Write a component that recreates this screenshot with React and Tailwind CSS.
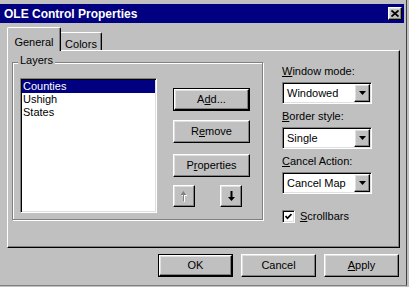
import React from 'react';

const raised =
  'border border-t-white border-l-white border-r-black border-b-black shadow-[inset_-1px_-1px_0_#808080,inset_1px_1px_0_#dfdfdf] bg-[#c0c0c0]';
const sunken =
  'border border-t-[#808080] border-l-[#808080] border-r-white border-b-white shadow-[inset_1px_1px_0_#000,inset_-1px_-1px_0_#dfdfdf]';

function Btn({ w = 'w-[75px]', def, children }) {
  const face = (
    <div className={`${raised} w-full h-full flex items-center justify-center`}>{children}</div>
  );
  if (def) {
    return <div className={`${w} h-[23px] border border-black`}>{face}</div>;
  }
  return <div className={`${w} h-[23px]`}>{face}</div>;
}

function U({ children }) {
  return <span className="underline underline-offset-[1px] decoration-1">{children}</span>;
}

function Combo({ value }) {
  return (
    <div className={`${sunken} bg-white h-[22px] w-[90px] flex items-center p-[1px]`}>
      <span className="flex-1 pl-[3px]">{value}</span>
      <div className={`${raised} w-[16px] h-[18px] flex items-center justify-center`}>
        <svg width="7" height="4" viewBox="0 0 7 4">
          <polygon points="0,0 7,0 3.5,4" fill="#000" />
        </svg>
      </div>
    </div>
  );
}

function Arrow({ up, disabled }) {
  const shape = up ? (
    <>
      <rect x="3" y="2" width="1" height="8" />
      <polygon points="0.5,4 6.5,4 3.5,0" />
    </>
  ) : (
    <>
      <rect x="2.5" y="0" width="2" height="7" />
      <polygon points="0,6 7,6 3.5,10" />
    </>
  );
  if (disabled) {
    return (
      <svg width="8" height="11" viewBox="0 0 8 11">
        <g fill="#fff" transform="translate(1,1)">{shape}</g>
        <g fill="#808080">{shape}</g>
      </svg>
    );
  }
  return (
    <svg width="7" height="10" viewBox="0 0 7 10">
      <g fill="#000">{shape}</g>
    </svg>
  );
}

export default function App() {
  return (
    <div className="w-[409px] h-[287px] bg-[#c0c0c0] font-['Liberation_Sans',Arial,sans-serif] text-[11px] leading-[13px] text-black overflow-hidden">
      <div className="w-[407px] h-[286px] border-r border-b border-r-[#404040] border-b-[#808080] pt-[4px]">
        {/* Title bar */}
        <div className="h-[19px] mr-[2px] bg-[#000080] flex items-center justify-between pl-[4px] pr-[2px]">
          <span className="text-white font-bold text-[12px] leading-[14px]">OLE Control Properties</span>
          <div className={`${raised} w-[14px] h-[13px] flex items-center justify-center`}>
            <svg width="8" height="7" viewBox="0 0 8 7">
              <path d="M0.5 0.5 L7.5 6.5 M7.5 0.5 L0.5 6.5" stroke="#000" strokeWidth="1.8" />
            </svg>
          </div>
        </div>

        {/* Tabs */}
        <div className="relative z-10 mt-[4px] ml-[7px] h-[24px] -mb-[1px] flex items-end">
          <div className="w-[54px] h-[24px] bg-[#c0c0c0] border-t border-l border-r border-t-white border-l-white border-r-black rounded-t-[2px] shadow-[inset_-1px_0_0_#808080] flex justify-center pt-[8px]">
            General
          </div>
          <div className="w-[41px] h-[18px] mb-[1px] bg-[#c0c0c0] border-t border-r border-t-white border-r-black rounded-tr-[2px] shadow-[inset_-1px_0_0_#808080] flex justify-center pt-[5px]">
            Colors
          </div>
        </div>

        {/* Panel */}
        <div className="ml-[7px] w-[393px] h-[198px] border border-t-white border-l-white border-r-black border-b-black shadow-[inset_-1px_-1px_0_#808080] flex items-start pt-[11px] pl-[4px]">
          {/* Layers group */}
          <div className="relative w-[251px] h-[158px] border border-[#808080] shadow-[inset_1px_1px_0_#fff,1px_1px_0_#fff] flex items-start pl-[7px] pt-[15px]">
            <span className="absolute -top-[9px] left-[5px] px-[2px] bg-[#c0c0c0]">Layers</span>
            <div className={`${sunken} bg-white w-[137px] h-[135px] p-[1px]`}>
              <div className="bg-[#000080] text-white h-[13px] pl-[1px]">Counties</div>
              <div className="h-[13px] pl-[1px]">Ushigh</div>
              <div className="h-[13px] pl-[1px]">States</div>
            </div>
            <div className="ml-[16px] mt-[10px] w-[77px] flex flex-col">
              <Btn w="w-[77px]" def>
                A<U>d</U>d...
              </Btn>
              <div className="mt-[9px]">
                <Btn w="w-[77px]">
                  R<U>e</U>move
                </Btn>
              </div>
              <div className="mt-[11px]">
                <Btn w="w-[77px]">
                  P<U>r</U>operties
                </Btn>
              </div>
              <div className="mt-[8px] flex gap-[25px]">
                <div className={`${raised} w-[22px] h-[22px] flex items-center justify-center`}>
                  <Arrow up disabled />
                </div>
                <div className={`${raised} w-[22px] h-[22px] flex items-center justify-center`}>
                  <Arrow />
                </div>
              </div>
            </div>
          </div>

          {/* Right column */}
          <div className="ml-[19px] mt-[3px] w-[90px] flex flex-col">
            <div className="h-[13px] mb-[4px]">
              <U>W</U>indow mode:
            </div>
            <Combo value="Windowed" />
            <div className="h-[13px] mt-[6px] mb-[4px]">
              <U>B</U>order style:
            </div>
            <Combo value="Single" />
            <div className="h-[13px] mt-[6px] mb-[4px]">
              <U>C</U>ancel Action:
            </div>
            <Combo value="Cancel Map" />
            <div className="mt-[16px] flex items-center">
              <div className={`${sunken} bg-white w-[13px] h-[13px] flex items-center justify-center`}>
                <svg width="7" height="7" viewBox="0 0 7 7">
                  <path d="M0.5 3 L2.5 5.3 L6.5 1" stroke="#000" strokeWidth="1.7" fill="none" />
                </svg>
              </div>
              <span className="ml-[5px]">
                <U>S</U>crollbars
              </span>
            </div>
          </div>
        </div>

        {/* Bottom buttons */}
        <div className="mt-[6px] pr-[7px] flex justify-end gap-[8px]">
          <Btn def>OK</Btn>
          <Btn>Cancel</Btn>
          <Btn>
            <U>A</U>pply
          </Btn>
        </div>
      </div>
    </div>
  );
}
